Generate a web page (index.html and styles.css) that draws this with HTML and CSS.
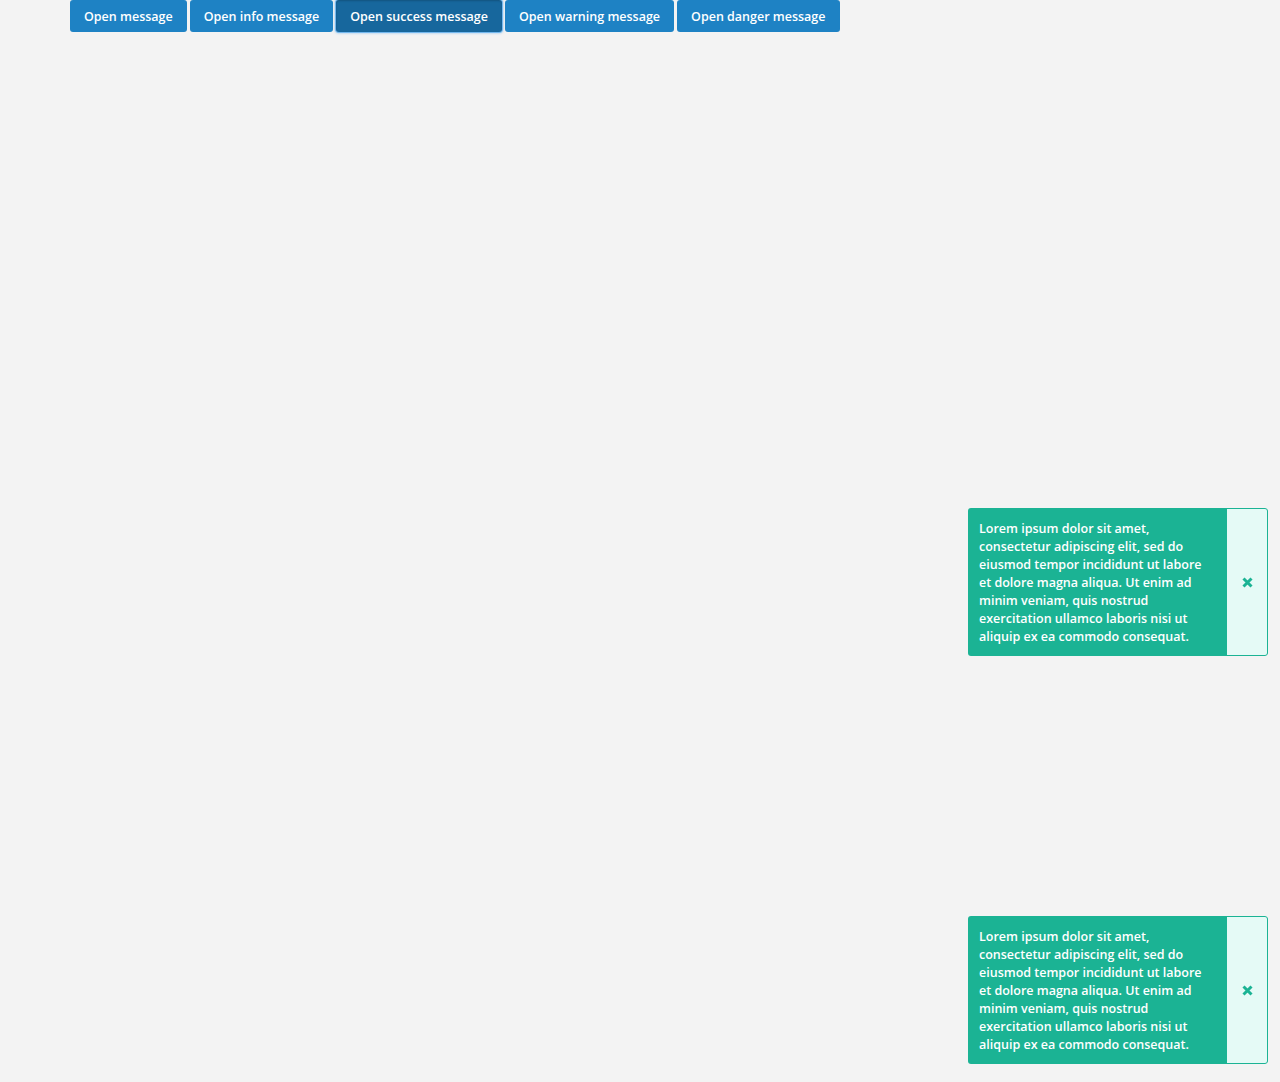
FILE: index.html
```html
<!DOCTYPE html>
<html>
<head>
<meta charset="utf-8">
<link rel="stylesheet" href="styles.css">
</head>
<body>
<div class="toolbar">
  <button class="btn">Open message</button>
  <button class="btn">Open info message</button>
  <button class="btn btn-focus">Open success message</button>
  <button class="btn">Open warning message</button>
  <button class="btn">Open danger message</button>
</div>

<div class="toast toast-one">
  <div class="toast-text">Lorem ipsum dolor sit amet, consectetur adipiscing elit, sed do eiusmod tempor incididunt ut labore et dolore magna aliqua. Ut enim ad minim veniam, quis nostrud exercitation ullamco laboris nisi ut aliquip ex ea commodo consequat.</div>
  <div class="toast-close"><svg width="11" height="11" viewBox="0 0 11 11"><path d="M1.5 1.5 L9.5 9.5 M9.5 1.5 L1.5 9.5" stroke="#1bb394" stroke-width="3" stroke-linecap="butt"/></svg></div>
</div>

<div class="toast toast-two">
  <div class="toast-text">Lorem ipsum dolor sit amet, consectetur adipiscing elit, sed do eiusmod tempor incididunt ut labore et dolore magna aliqua. Ut enim ad minim veniam, quis nostrud exercitation ullamco laboris nisi ut aliquip ex ea commodo consequat.</div>
  <div class="toast-close"><svg width="11" height="11" viewBox="0 0 11 11"><path d="M1.5 1.5 L9.5 9.5 M9.5 1.5 L1.5 9.5" stroke="#1bb394" stroke-width="3" stroke-linecap="butt"/></svg></div>
</div>
</body>
</html>
```

FILE: styles.css
```css
html, body {
  margin: 0;
  padding: 0;
  background: #f3f3f3;
  height: 100%;
  font-family: "Open Sans", Lato, sans-serif;
}
.toolbar {
  display: flex;
  gap: 3px;
  padding-left: 70px;
}
.btn {
  height: 32px;
  padding: 0 14px;
  border: none;
  border-radius: 3px;
  background: #1e82c4;
  color: #fff;
  font-family: "Open Sans", Lato, sans-serif;
  font-weight: 600;
  font-size: 12.5px;
  cursor: pointer;
}
.btn-focus {
  background: #17679d;
  box-shadow: 0 0 0 1px #74b8ee, 0 0 2px 2px rgba(108,179,236,0.35), inset 0 1px 2px rgba(0,0,0,0.2);
}
.toast {
  position: fixed;
  right: 12px;
  width: 300px;
  height: 148px;
  display: flex;
  border-radius: 3px;
  overflow: hidden;
  box-sizing: border-box;
}
.toast-one { top: 508px; }
.toast-two { top: 916px; }
.toast-text {
  flex: 1;
  background: #1bb394;
  color: #fff;
  font-size: 12.5px;
  font-weight: 600;
  line-height: 18px;
  padding: 12px 16px 0 11px;
}
.toast-close {
  width: 41px;
  background: #e5faf6;
  border: 1px solid #1bb394;
  border-left: none;
  border-radius: 0 3px 3px 0;
  box-sizing: border-box;
  display: flex;
  align-items: center;
  justify-content: center;
}
```
